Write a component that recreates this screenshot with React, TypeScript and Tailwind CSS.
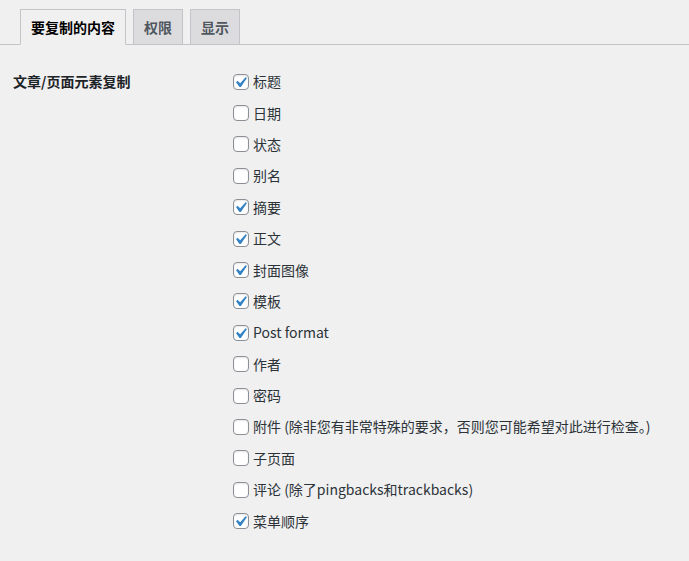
const items: { label: string; checked: boolean }[] = [
  { label: "标题", checked: true },
  { label: "日期", checked: false },
  { label: "状态", checked: false },
  { label: "别名", checked: false },
  { label: "摘要", checked: true },
  { label: "正文", checked: true },
  { label: "封面图像", checked: true },
  { label: "模板", checked: true },
  { label: "Post format", checked: true },
  { label: "作者", checked: false },
  { label: "密码", checked: false },
  { label: "附件 (除非您有非常特殊的要求，否则您可能希望对此进行检查。)", checked: false },
  { label: "子页面", checked: false },
  { label: "评论 (除了pingbacks和trackbacks)", checked: false },
  { label: "菜单顺序", checked: true },
];

const Checkbox = ({ checked }: { checked: boolean }) => (
  <span className="relative block w-4 h-4 shrink-0 rounded-[4px] border border-[#8c8f94] bg-white shadow-[inset_0_1px_2px_rgba(0,0,0,0.1)]">
    {checked && (
      <svg
        viewBox="0 0 20 20"
        className="absolute -left-[4px] -top-[3px] w-[21px] h-[21px]"
      >
        <path
          d="M14.83 4.89l1.34.94-5.81 8.38H9.02L5.78 9.67l1.34-1.25 2.57 2.4z"
          fill="#3582c4"
        />
      </svg>
    )}
  </span>
);

const App = () => {
  return (
    <main
      className="w-full min-h-[561px] bg-[#f0f0f1] text-[#1d2327] text-[14px]"
      style={{ fontFamily: '"Noto Sans CJK SC", "Noto Sans", sans-serif' }}
    >
      <nav className="flex flex-row pt-[9px] pl-[13px] border-b border-[#c3c4c7]">
        <span className="ml-[7px] -mb-px px-[10px] py-[5px] leading-[24px] font-semibold border border-[#c3c4c7] border-b-[#f0f0f1] bg-[#f0f0f1] text-[#000]">
          要复制的内容
        </span>
        <span className="ml-[7px] px-[10px] py-[5px] leading-[24px] font-semibold border border-b-0 border-[#c3c4c7] bg-[#dcdcde] text-[#50575e]">
          权限
        </span>
        <span className="ml-[7px] px-[10px] py-[5px] leading-[24px] font-semibold border border-b-0 border-[#c3c4c7] bg-[#dcdcde] text-[#50575e]">
          显示
        </span>
      </nav>

      <div className="flex flex-row mt-[21px]">
        <div className="w-[233px] shrink-0 pl-[13px] h-[31.4px] flex items-center font-semibold text-[#1d2327]">
          文章/页面元素复制
        </div>
        <div className="flex flex-col">
          {items.map((item) => (
            <label
              key={item.label}
              className="h-[31.4px] flex flex-row items-center gap-[4px] text-[#2c3338]"
            >
              <Checkbox checked={item.checked} />
              <span>{item.label}</span>
            </label>
          ))}
        </div>
      </div>
    </main>
  );
};

export default App;
